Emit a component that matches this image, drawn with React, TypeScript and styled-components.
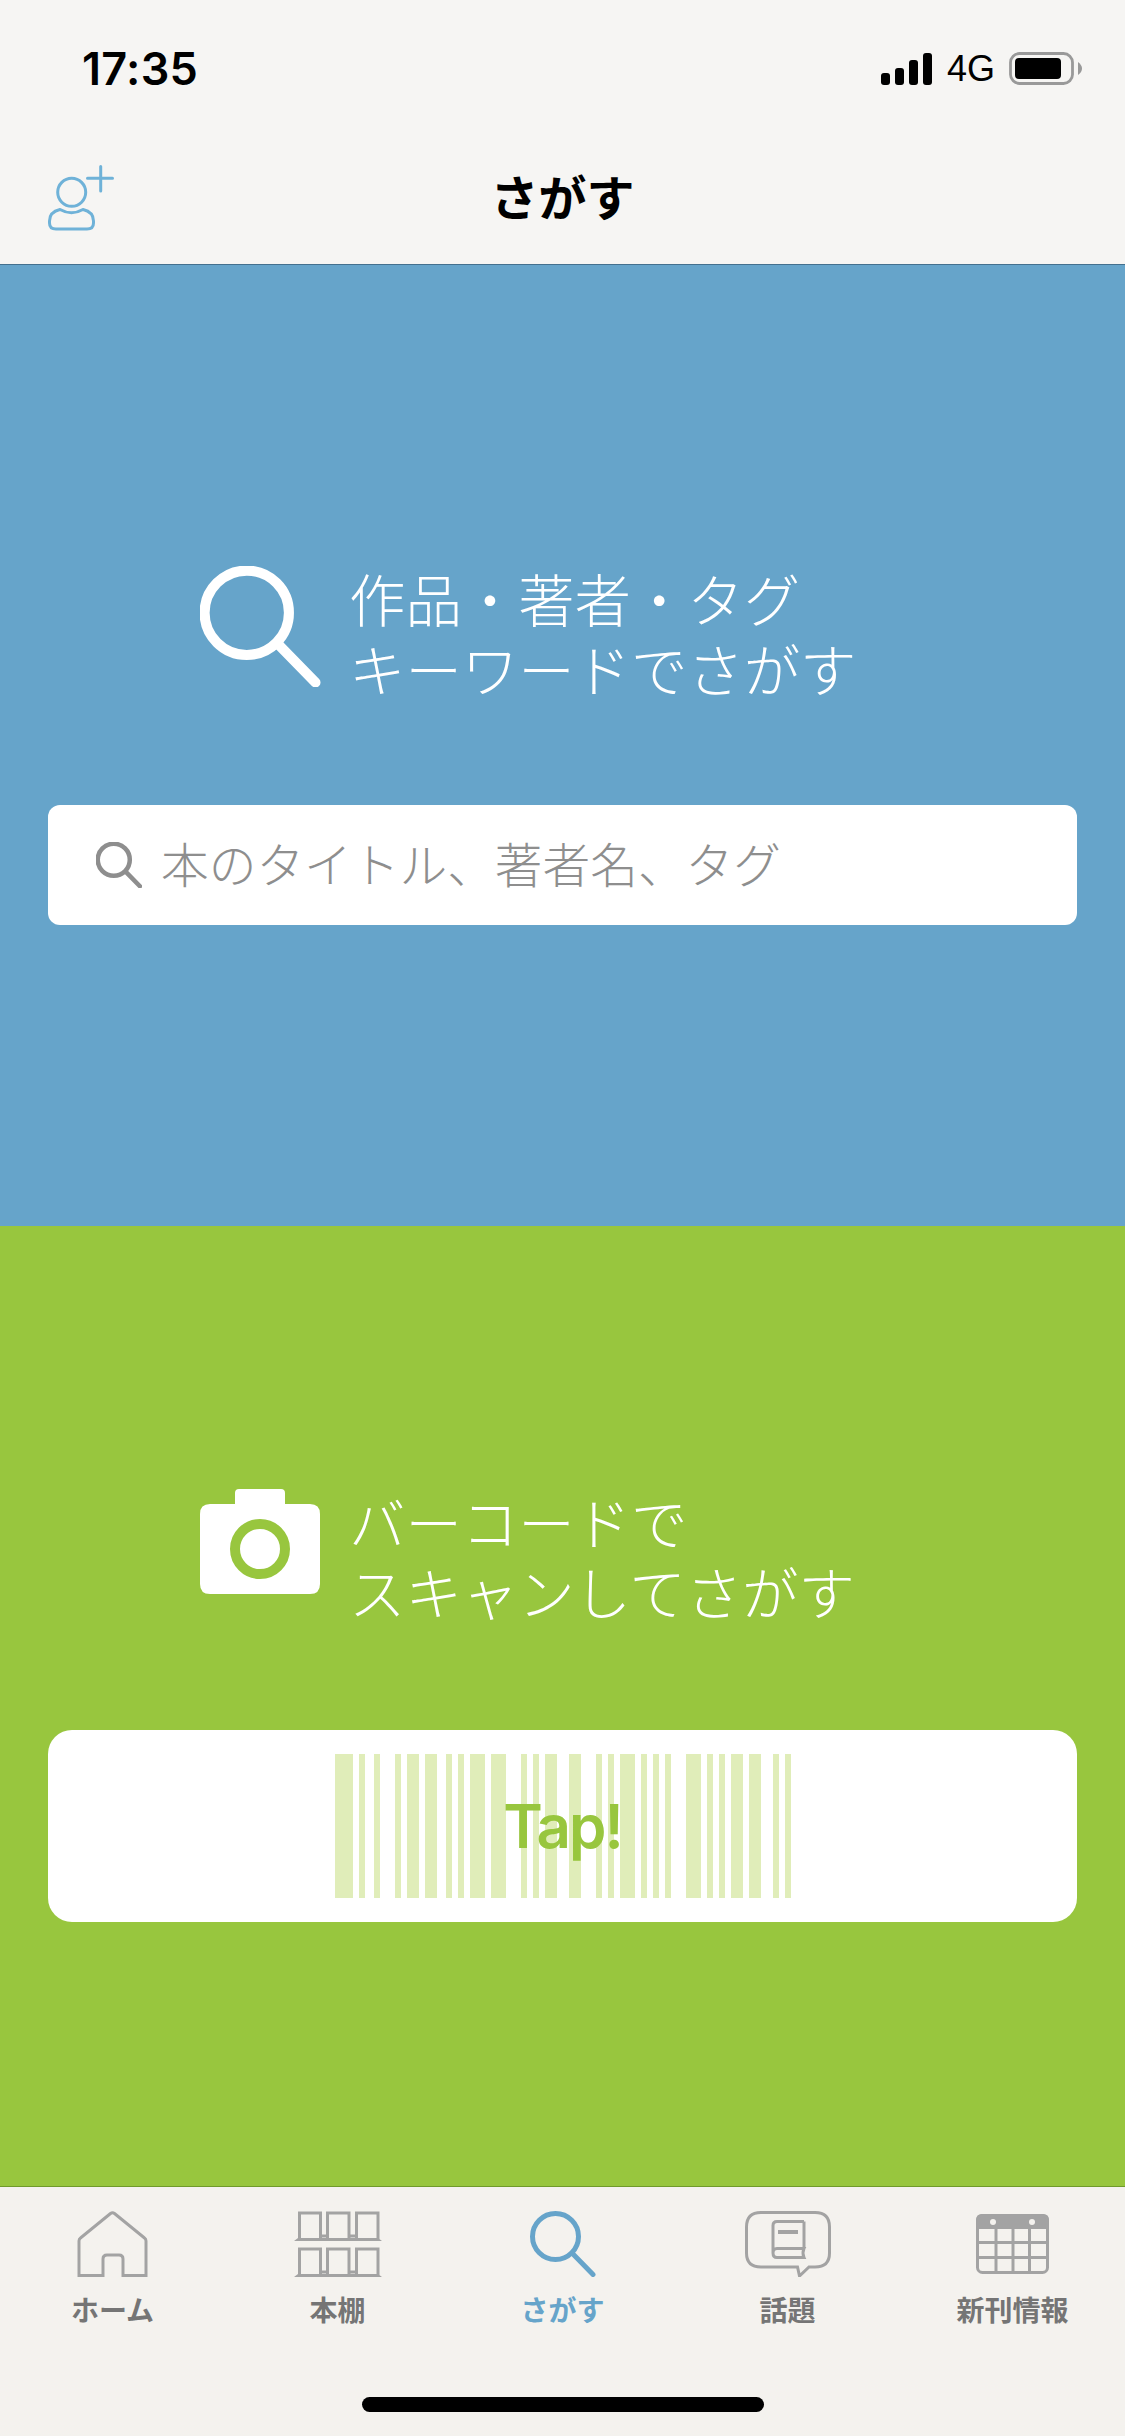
import styled, { createGlobalStyle } from 'styled-components';

const BLUE = '#66a4ca';
const GREEN = '#98c63e';
const ICON_GRAY = '#a3a3a3';

// [start, width] of each bar, measured from the left edge of the barcode
const BARS: [number, number][] = [
  [0, 18], [24, 6], [39, 6], [60, 6], [72, 12], [90, 12], [111, 6], [123, 6], [135, 15],
  [156, 15], [186, 6], [198, 6], [210, 12], [234, 12], [261, 6], [273, 6], [285, 15],
  [306, 6], [318, 6], [330, 6], [351, 15], [372, 6], [384, 6], [396, 12], [414, 12],
  [438, 6], [450, 6],
];

const GlobalStyle = createGlobalStyle`
  html, body {
    margin: 0;
    padding: 0;
    background: #f6f5f3;
  }
  body {
    font-family: "Noto Sans CJK JP", "Noto Sans", sans-serif;
  }
`;

const Screen = styled.div`
  width: 1125px;
  height: 2436px;
  display: flex;
  flex-direction: column;
  overflow: hidden;
`;

const Header = styled.header`
  background: #f6f5f3;
  border-bottom: 1px solid #44708e;
`;

const StatusBar = styled.div`
  height: 132px;
  box-sizing: border-box;
  padding: 5px 43px 0 82px;
  display: flex;
  align-items: center;
  justify-content: space-between;
`;

const Clock = styled.span`
  font-family: Inter, "Liberation Sans", sans-serif;
  font-size: 45px;
  font-weight: 600;
  letter-spacing: 0.3px;
  color: #000;
`;

const StatusIcons = styled.div`
  display: flex;
  align-items: center;
  gap: 14px;
`;

const Network = styled.span`
  font-family: "Liberation Sans", sans-serif;
  font-size: 36px;
  color: #000;
`;

const NavBar = styled.nav`
  height: 132px;
  box-sizing: border-box;
  padding-left: 48px;
  display: grid;
  grid-template-columns: 1fr auto 1fr;
  align-items: center;
`;

const NavTitle = styled.h1`
  margin: 0 48px 6px 0;
  font-size: 48px;
  font-weight: 700;
  line-height: 1;
  color: #000;
`;

const Panel = styled.section<{ $color: string }>`
  flex: 1;
  background: ${(p) => p.$color};
  padding: 0 48px;
  display: flex;
  flex-direction: column;
  justify-content: center;
`;

const Lead = styled.div<{ $gap: number }>`
  display: flex;
  gap: 28px;
  padding-left: 152px;
  margin-bottom: ${(p) => p.$gap}px;
`;

const LeadIcon = styled.div`
  width: 121px;
  flex-shrink: 0;
  display: flex;
`;

const LeadText = styled.p`
  margin: -3px 0 3px;
  font-size: 56.4px;
  font-weight: 300;
  line-height: 70px;
  color: #fff;
  white-space: nowrap;
`;

const SearchField = styled.div`
  height: 120px;
  background: #fff;
  border-radius: 12px;
  padding-left: 48px;
  display: flex;
  align-items: center;
  gap: 19px;
`;

const Placeholder = styled.span`
  margin-bottom: 5px;
  font-size: 47.7px;
  font-weight: 300;
  color: #8e8e8e;
`;

const TapButton = styled.div`
  height: 192px;
  background: #fff;
  border-radius: 24px;
  display: grid;
  place-items: center;
`;

const Barcode = styled.svg`
  grid-area: 1 / 1;
  display: block;
`;

const TapLabel = styled.span`
  grid-area: 1 / 1;
  position: relative;
  font-family: Inter, "Liberation Sans", sans-serif;
  font-size: 60px;
  font-weight: 600;
  letter-spacing: -2px;
  color: ${GREEN};
`;

const TabBar = styled.footer`
  height: 250px;
  box-sizing: border-box;
  flex-shrink: 0;
  background: #f4f2ee;
  border-top: 1px solid #6f9a2a;
  padding-top: 24px;
  display: flex;
  flex-direction: column;
  align-items: center;
`;

const Tabs = styled.div`
  width: 100%;
  display: grid;
  grid-template-columns: repeat(5, 1fr);
`;

const Tab = styled.div<{ $active?: boolean }>`
  display: flex;
  flex-direction: column;
  align-items: center;
  color: ${(p) => (p.$active ? BLUE : '#757575')};
`;

const TabIcon = styled.div`
  height: 66px;
  display: flex;
  align-items: center;
`;

const TabLabel = styled.span`
  margin-top: 12px;
  font-size: 28px;
  font-weight: 700;
  line-height: 40px;
`;

const HomeIndicator = styled.div`
  width: 402px;
  height: 15px;
  margin-top: 68px;
  border-radius: 8px;
  background: #000;
`;

function SearchIcon({ size, color, weight = 5 }: { size: number; color: string; weight?: number }) {
  return (
    <svg width={size} height={size} viewBox="0 0 66 66" fill="none" stroke={color} strokeWidth={weight} strokeLinecap="round">
      <circle cx="25.5" cy="25.5" r="23" />
      <path d="M42.5 42.5 L63 63.5" />
    </svg>
  );
}

function SignalIcon() {
  return (
    <svg width="52" height="32" viewBox="0 0 52 32" fill="#000">
      <rect x="0" y="20" width="9" height="12" rx="3" />
      <rect x="14" y="15" width="9" height="17" rx="3" />
      <rect x="28" y="7" width="9" height="25" rx="3" />
      <rect x="42" y="0" width="9" height="32" rx="3" />
    </svg>
  );
}

function BatteryIcon() {
  return (
    <svg width="73" height="33" viewBox="0 0 73 33">
      <rect x="1.5" y="1.5" width="62" height="30" rx="9" fill="none" stroke="#999" strokeWidth="2.8" />
      <rect x="6" y="6" width="46" height="21" rx="4" fill="#000" />
      <path d="M69 10 Q73 13 73 16.5 Q73 20 69 23 Z" fill="#999" />
    </svg>
  );
}

function AddUserIcon() {
  return (
    <svg width="68" height="66" viewBox="0 0 68 66" fill="none" stroke="#6fb2d8" strokeWidth="3" strokeLinecap="round">
      <circle cx="23.7" cy="27.3" r="14" />
      <path d="M12 44.5 Q23.5 51 35 44.5 Q45.5 47 45.5 56 V58 Q45.5 64 39 64 H8 Q1.5 64 1.5 58 V56 Q1.5 47 12 44.5 Z" />
      <path d="M39.5 13.3 H64.5 M52.7 1.5 V26" />
    </svg>
  );
}

function CameraIcon() {
  return (
    <svg width="120" height="105" viewBox="0 0 120 105">
      <path
        d="M35 15 V4 Q35 0 39 0 H81 Q85 0 85 4 V15 H110 Q120 15 120 25 V95 Q120 105 110 105 H10 Q0 105 0 95 V25 Q0 15 10 15 Z"
        fill="#fff"
      />
      <circle cx="60" cy="60" r="25" fill="#fff" stroke={GREEN} strokeWidth="10" />
    </svg>
  );
}

function HomeIcon() {
  return (
    <svg width="72" height="66" viewBox="0 0 72 66" fill="none" stroke={ICON_GRAY} strokeWidth="3">
      <path d="M2 64.5 V30 Q2 28 3.5 27 L33.5 2.5 Q35.5 1 37.5 2.5 L67.5 27 Q69 28 69 30 V64.5 H46 V48 Q46 44 42 44 H30 Q26 44 26 48 V64.5 Z" />
    </svg>
  );
}

function ShelfIcon() {
  return (
    <svg width="88" height="66" viewBox="0 0 88 66" fill="none" stroke={ICON_GRAY} strokeWidth="3">
      <path d="M5.5 28 V2 H26.5 V28 M33.5 28 V2 H55 V28 M62.5 28 V2 H84 V28 M26.5 25 H33.5 M55 25 H62.5" />
      <path d="M5.5 64 V38 H26.5 V64 M33.5 64 V38 H55 V64 M62.5 64 V38 H84 V64 M26.5 61 H33.5 M55 61 H62.5" />
      <path d="M0 30 L4 27 H84 L88 30 Z M0 66 L4 63 H84 L88 66 Z" fill={ICON_GRAY} stroke="none" />
    </svg>
  );
}

function TopicIcon() {
  return (
    <svg width="86" height="66" viewBox="0 0 86 66" fill="none" stroke={ICON_GRAY} strokeWidth="3">
      <path d="M16 1.5 H70 Q84.5 1.5 84.5 16 V42 Q84.5 56 70 56 H64 L54.5 65 L52.5 56 H16 Q1.5 56 1.5 42 V16 Q1.5 1.5 16 1.5 Z" />
      <path d="M59 10.5 H32 Q28 10.5 28 14.5 V42 Q28 46.5 32 46.5 H59 Q57 42 59 37.5 H32 Q28 37.5 28 42 M59 37.5 V10.5" />
      <path d="M33 21 H53" strokeWidth="4" />
    </svg>
  );
}

function CalendarIcon() {
  return (
    <svg width="73" height="60" viewBox="0 0 73 60" fill="none" stroke={ICON_GRAY} strokeWidth="3">
      <path d="M6 0 H67 Q73 0 73 6 V15 H0 V6 Q0 0 6 0 Z" fill={ICON_GRAY} stroke="none" />
      <circle cx="17" cy="8" r="3" fill="#f4f2ee" stroke="none" />
      <circle cx="56" cy="8" r="3" fill="#f4f2ee" stroke="none" />
      <rect x="1.5" y="1.5" width="70" height="57" rx="5" />
      <path d="M20 14 V59 M37 14 V59 M53.5 14 V59 M1 28.5 H72 M1 43.5 H72" />
    </svg>
  );
}

const TABS = [
  { label: 'ホーム', icon: <HomeIcon /> },
  { label: '本棚', icon: <ShelfIcon /> },
  { label: 'さがす', icon: <SearchIcon size={66} color={BLUE} />, active: true },
  { label: '話題', icon: <TopicIcon /> },
  { label: '新刊情報', icon: <CalendarIcon /> },
];

function App() {
  return (
    <Screen>
      <GlobalStyle />
      <Header>
        <StatusBar>
          <Clock>17:35</Clock>
          <StatusIcons>
            <SignalIcon />
            <Network>4G</Network>
            <BatteryIcon />
          </StatusIcons>
        </StatusBar>
        <NavBar>
          <AddUserIcon />
          <NavTitle>さがす</NavTitle>
        </NavBar>
      </Header>

      <Panel $color={BLUE}>
        <Lead $gap={99}>
          <LeadIcon>
            <SearchIcon size={121} color="#fff" weight={5.5} />
          </LeadIcon>
          <LeadText>
            作品・著者・タグ
            <br />
            キーワードでさがす
          </LeadText>
        </Lead>
        <SearchField>
          <SearchIcon size={46} color="#8e8e8e" weight={6.5} />
          <Placeholder>本のタイトル、著者名、タグ</Placeholder>
        </SearchField>
      </Panel>

      <Panel $color={GREEN}>
        <Lead $gap={101}>
          <LeadIcon>
            <CameraIcon />
          </LeadIcon>
          <LeadText>
            バーコードで
            <br />
            スキャンしてさがす
          </LeadText>
        </Lead>
        <TapButton>
          <Barcode width="456" height="144" viewBox="0 0 456 144" fill="#e0edb9">
            {BARS.map(([x, w]) => (
              <rect key={x} x={x} y="0" width={w} height="144" />
            ))}
          </Barcode>
          <TapLabel>Tap!</TapLabel>
        </TapButton>
      </Panel>

      <TabBar>
        <Tabs>
          {TABS.map(({ label, icon, active }) => (
            <Tab key={label} $active={active}>
              <TabIcon>{icon}</TabIcon>
              <TabLabel>{label}</TabLabel>
            </Tab>
          ))}
        </Tabs>
        <HomeIndicator />
      </TabBar>
    </Screen>
  );
}

export default App;
